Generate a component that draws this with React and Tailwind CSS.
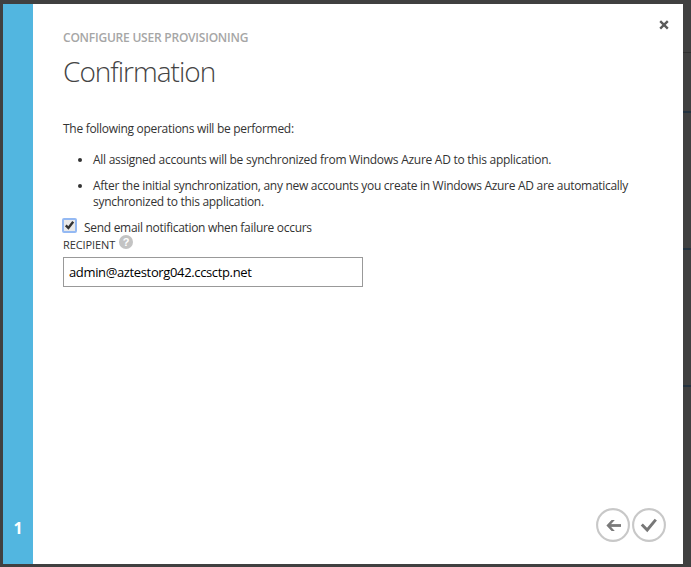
import React from 'react';

const dividers = ['mt-[52px] h-px bg-[#303030]', 'mt-[58px] h-[2px] bg-[#243340]', 'mt-[135px] h-[2px] bg-[#243340]', 'mt-[135px] h-[2px] bg-[#243340]'];

function CloseIcon() {
  return (
    <svg width="10" height="10" viewBox="0 0 10 10" fill="none" stroke="#5a5a5a" strokeWidth="2.4">
      <path d="M1.2 1.2L8.8 8.6M8.8 1.2L1.2 8.6" />
    </svg>
  );
}

function BackIcon() {
  return (
    <svg width="34" height="34" viewBox="0 0 34 34" fill="none">
      <circle cx="17" cy="17" r="15.9" stroke="#c8c8c8" strokeWidth="2.1" />
      <path d="M25 17.5H13" stroke="#7a7a7a" strokeWidth="2.8" />
      <path d="M18.8 12H15.6L10.4 17.5L15.6 23H18.8L13.8 17.5Z" fill="#7a7a7a" />
    </svg>
  );
}

function CompleteIcon() {
  return (
    <svg width="34" height="34" viewBox="0 0 34 34" fill="none">
      <circle cx="17" cy="17" r="15.9" stroke="#c8c8c8" strokeWidth="2.1" />
      <path d="M9.8 16.4L15.2 22L23.8 11.6" stroke="#777" strokeWidth="2.9" />
    </svg>
  );
}

export default function App() {
  return (
    <div className="flex h-[567px] w-[691px] overflow-hidden bg-[#404040] pl-[3px] font-['Open_Sans','Noto_Sans',sans-serif] text-xs text-[#333]">
      <div className="mt-1 flex h-[560px] w-[680px] shrink-0 bg-white">
        <aside className="flex w-[30px] shrink-0 items-end justify-center bg-[#52b6e0] pb-[26px]">
          <span className="text-base leading-5 font-bold text-white">1</span>
        </aside>
        <main className="flex min-w-0 flex-1 flex-col pl-[30px]">
          <header className="flex h-[91px] justify-between pr-[14px]">
            <div>
              <h2 className="mt-[26px] text-xs leading-4 font-semibold tracking-[-0.22px] whitespace-nowrap text-[#a6a6a6]">CONFIGURE USER PROVISIONING</h2>
              <h1 className="mt-[6px] text-[28px] leading-[38px] font-light tracking-[-1px] whitespace-nowrap text-[#444]">Confirmation</h1>
            </div>
            <button className="mt-4 h-[10px]" aria-label="Close"><CloseIcon /></button>
          </header>
          <section className="flex-1 pt-[26px]">
            <p className="h-4 leading-4 tracking-[-0.295px] whitespace-nowrap">The following operations will be performed:</p>
            <ul className="mt-[15px] flex flex-col gap-[10px] leading-4 tracking-[-0.295px] whitespace-nowrap">
              <li className="flex">
                <span className="mt-[6px] ml-[15px] h-1 w-1 rounded-full bg-[#333]" />
                <span className="ml-[11px] tracking-[-0.265px]">All assigned accounts will be synchronized from Windows Azure AD to this application.</span>
              </li>
              <li className="flex">
                <span className="mt-[6px] ml-[15px] h-1 w-1 rounded-full bg-[#333]" />
                <span className="ml-[11px]">After the initial synchronization, any new accounts you create in Windows Azure AD are automatically<br />synchronized to this application.</span>
              </li>
            </ul>
            <label className="mt-2 -ml-px flex h-[17px]">
              <span className="flex h-[15px] w-[15px] rounded-[2px] border-2 border-[#94b9f3] bg-[#e9e9e9]">
                <svg width="11" height="11" viewBox="0 0 11 11" fill="none" stroke="#333" strokeWidth="2.4"><path d="M1.8 5.4L4.4 8L9.2 1.8" /></svg>
              </span>
              <span className="mt-[2px] ml-[7px] leading-4 tracking-[-0.3px] whitespace-nowrap">Send email notification when failure occurs</span>
            </label>
            <div className="flex h-[22px]">
              <span className="mt-[2px] text-[11px] leading-4 tracking-[-0.1px]">RECIPIENT</span>
              <span className="ml-1 flex h-[14px] w-[14px] items-center justify-center rounded-full bg-[#c3c3c3] font-['Liberation_Sans',sans-serif] text-[11px] leading-[14px] font-bold text-white">?</span>
            </div>
            <input className="block h-[30px] w-[300px] border border-[#999] px-[5px] text-[13px] tracking-[-0.36px] text-black outline-none" defaultValue="admin@aztestorg042.ccsctp.net" />
          </section>
          <footer className="flex justify-end gap-[2px] pr-[17px] pb-[22px]">
            <button aria-label="Back"><BackIcon /></button>
            <button aria-label="Complete"><CompleteIcon /></button>
          </footer>
        </main>
      </div>
      <div className="w-2 shrink-0">
        {dividers.map((style, i) => <div key={i} className={style} />)}
      </div>
    </div>
  );
}
